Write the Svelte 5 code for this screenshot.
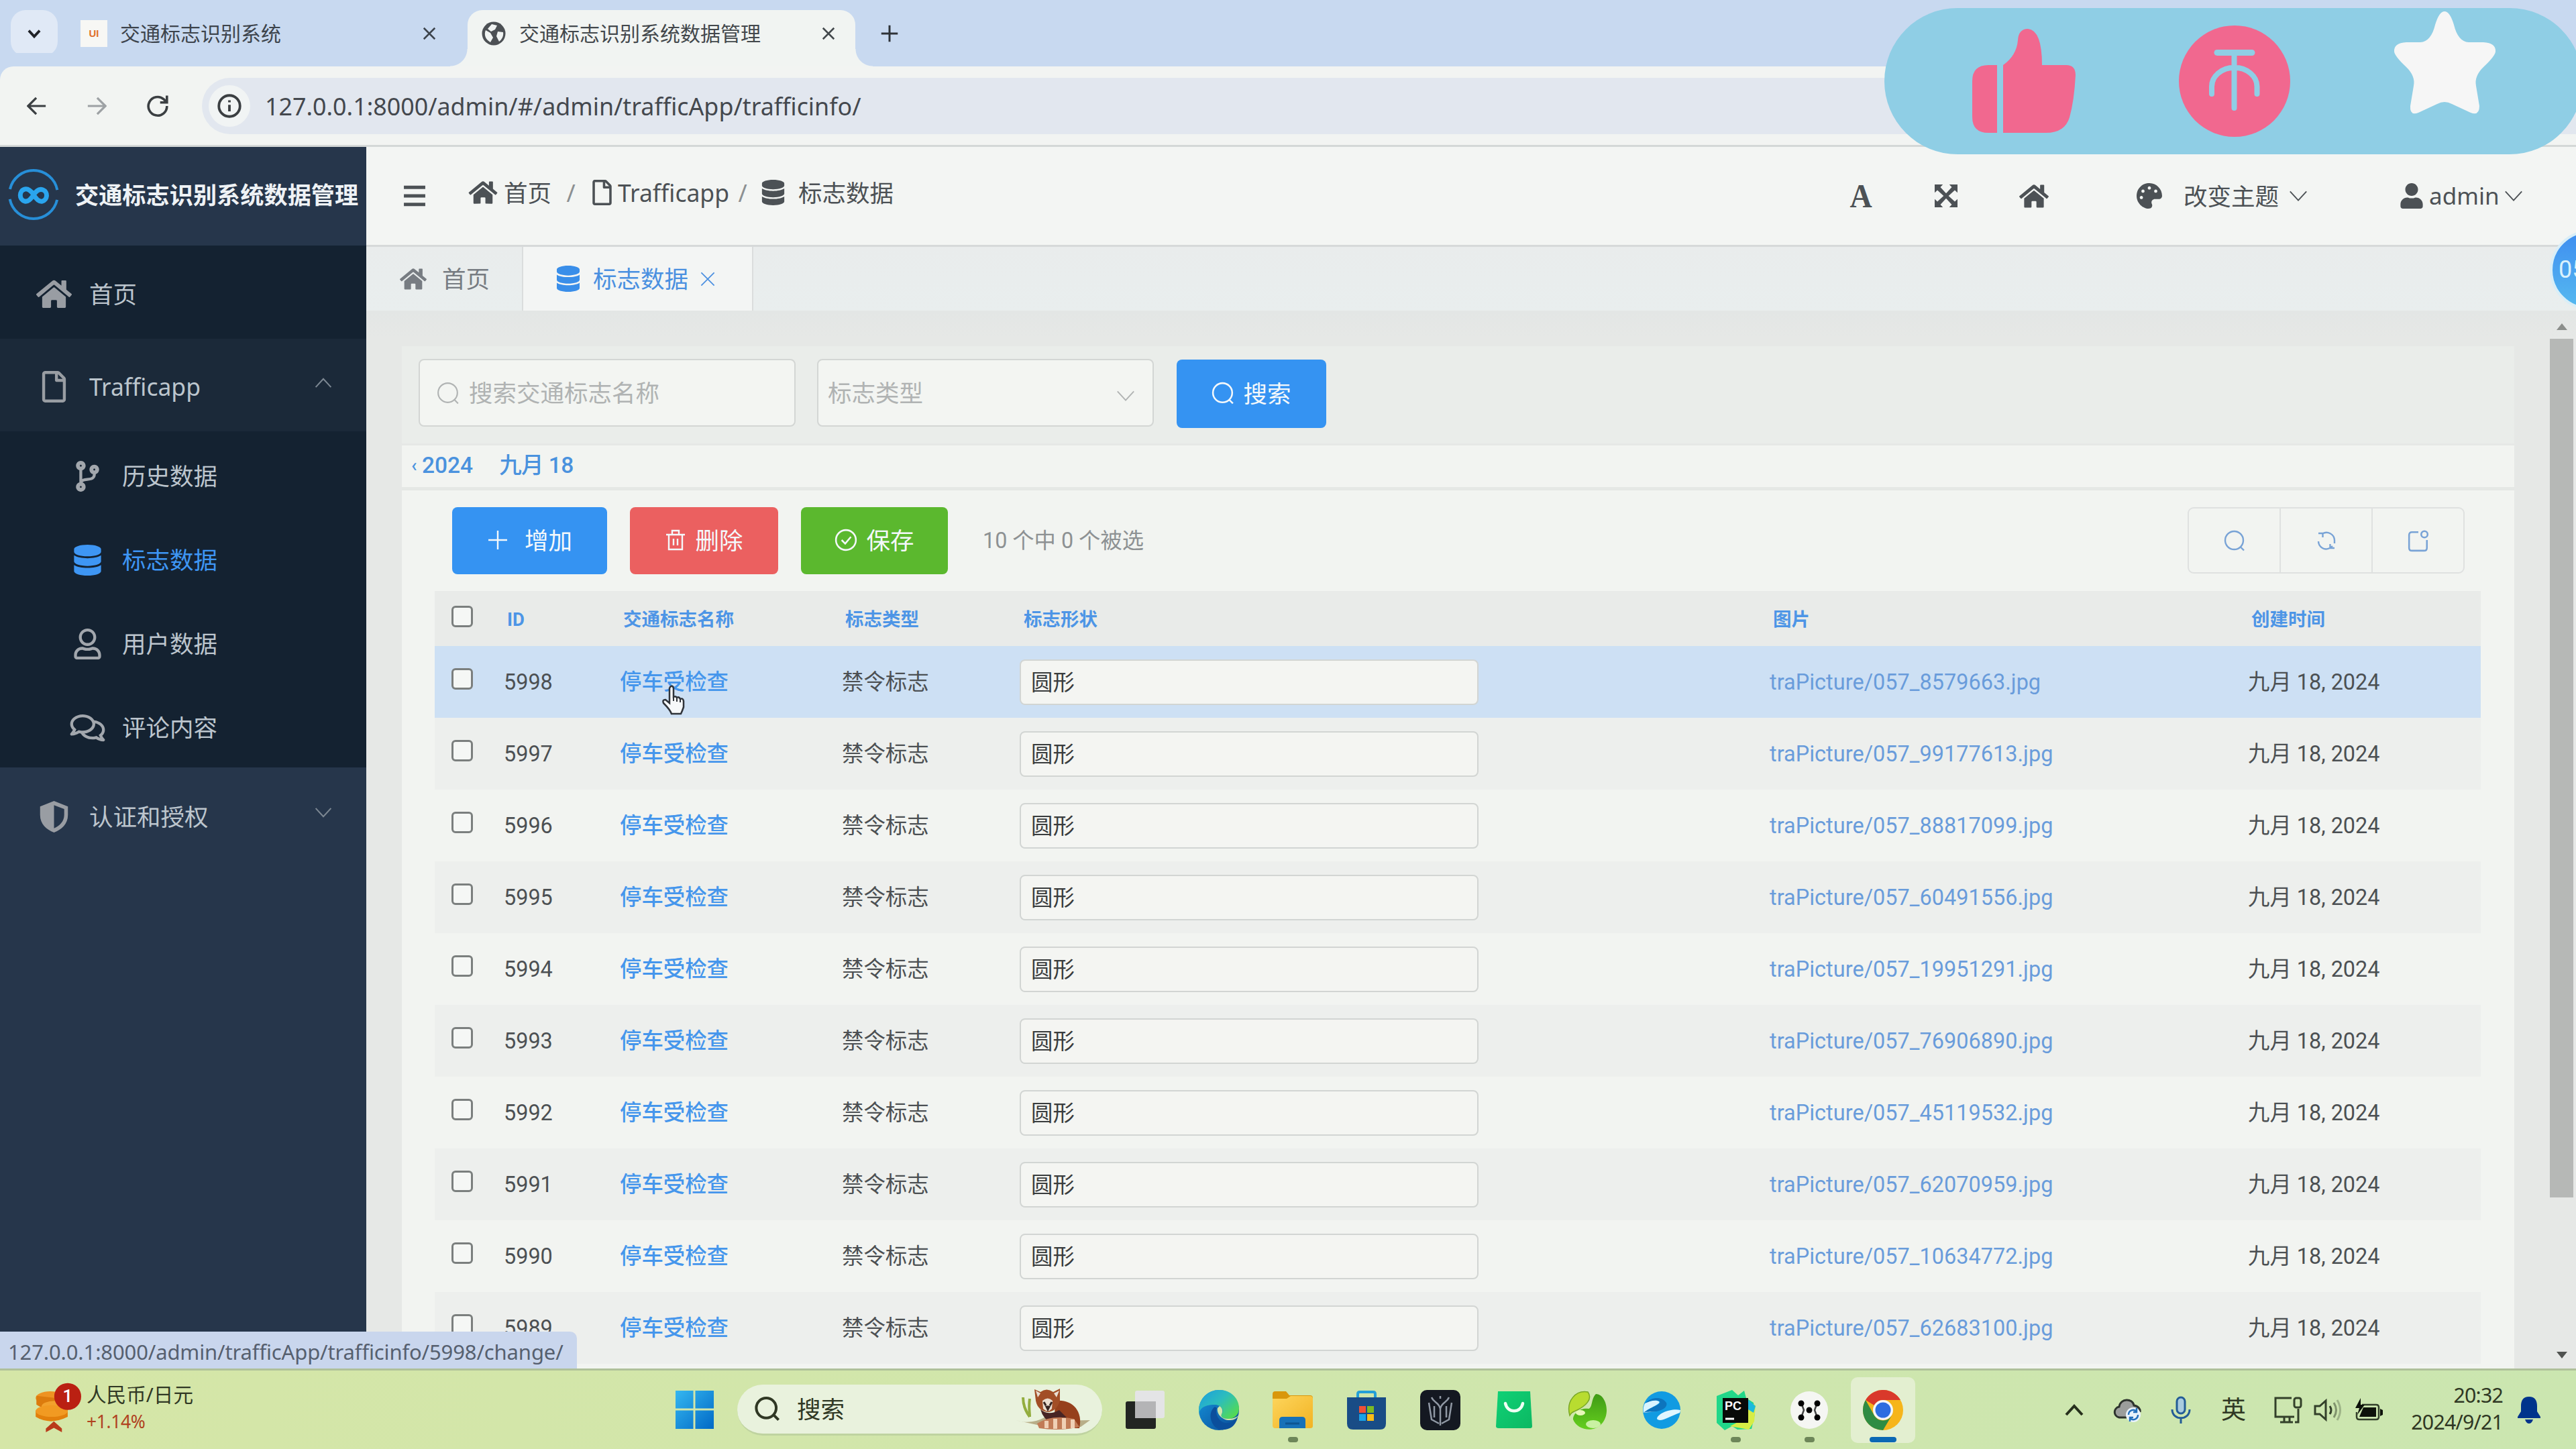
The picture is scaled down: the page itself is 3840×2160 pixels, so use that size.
<script>
  const rows = [
    ['5998', '8579663'], ['5997', '99177613'], ['5996', '88817099'], ['5995', '60491556'],
    ['5994', '19951291'], ['5993', '76906890'], ['5992', '45119532'], ['5991', '62070959'],
    ['5990', '10634772'], ['5989', '62683100']
  ];
  const submenu = [
    { icon: 'branch', label: '历史数据' },
    { icon: 'database', label: '标志数据', active: true },
    { icon: 'userOutline', label: '用户数据' },
    { icon: 'comments', label: '评论内容' }
  ];
  const apps = ['taskview', 'edge', 'folder', 'store', 'legend', 'bag', 'leaf', 'swirl', 'pycharm', 'nodes', 'chrome'];
  const running = ['folder', 'pycharm', 'nodes'];

  const solid = {
    home: ['0 0 576 512', 'M280.37 148.26L96 300.11V464a16 16 0 0 0 16 16l112.06-.29a16 16 0 0 0 15.92-16V368a16 16 0 0 1 16-16h64a16 16 0 0 1 16 16v95.64a16 16 0 0 0 16 16.05L464 480a16 16 0 0 0 16-16V300L295.67 148.26a12.19 12.19 0 0 0-15.3 0zM571.6 251.47L488 182.56V44.05a12 12 0 0 0-12-12h-56a12 12 0 0 0-12 12v72.61L318.47 43a48 48 0 0 0-61 0L4.34 251.47a12 12 0 0 0-1.6 16.9l25.5 31A12 12 0 0 0 45.15 301l235.22-193.74a12.19 12.19 0 0 1 15.3 0L530.9 301a12 12 0 0 0 16.9-1.6l25.5-31a12 12 0 0 0-1.7-16.93z'],
    database: ['0 0 448 512', 'M448 73.143v45.714C448 159.143 347.667 192 224 192S0 159.143 0 118.857V73.143C0 32.857 100.333 0 224 0s224 32.857 224 73.143zM448 176v102.857C448 319.143 347.667 352 224 352S0 319.143 0 278.857V176c48.125 33.143 136.208 48.572 224 48.572S399.874 209.143 448 176zm0 160v102.857C448 479.143 347.667 512 224 512S0 479.143 0 438.857V336c48.125 33.143 136.208 48.572 224 48.572S399.874 369.143 448 336z'],
    file: ['0 0 384 512', 'M369.9 97.9L286 14C277 5 264.8-.1 252.1-.1H48C21.5 0 0 21.5 0 48v416c0 26.5 21.5 48 48 48h288c26.5 0 48-21.5 48-48V131.9c0-12.7-5.1-25-14.1-34zM332.1 128H256V51.9l76.1 76.1zM48 464V48h160v104c0 13.3 10.7 24 24 24h104v288H48z'],
    user: ['0 0 448 512', 'M224 256c70.7 0 128-57.3 128-128S294.7 0 224 0 96 57.3 96 128s57.3 128 128 128zm89.6 32h-16.7c-22.2 10.2-46.9 16-72.9 16s-50.6-5.8-72.9-16h-16.7C60.2 288 0 348.2 0 422.4V464c0 26.5 21.5 48 48 48h352c26.5 0 48-21.5 48-48v-41.6c0-74.2-60.2-134.4-134.4-134.4z'],
    userOutline: ['0 0 448 512', 'M313.6 304c-28.7 0-42.5 16-89.6 16-47.1 0-60.8-16-89.6-16C60.2 304 0 364.2 0 438.4V464c0 26.5 21.5 48 48 48h352c26.5 0 48-21.5 48-48v-25.6c0-74.2-60.2-134.4-134.4-134.4zM400 464H48v-25.6c0-47.6 38.8-86.4 86.4-86.4 14.6 0 38.3 16 89.6 16 51.7 0 74.9-16 89.6-16 47.6 0 86.4 38.8 86.4 86.4V464zM224 288c79.5 0 144-64.5 144-144S303.5 0 224 0 80 64.5 80 144s64.5 144 144 144zm0-240c52.9 0 96 43.1 96 96s-43.1 96-96 96-96-43.1-96-96 43.1-96 96-96z'],
    palette: ['0 0 512 512', 'M204.3 5C104.9 24.4 24.8 104.3 5.2 203.4c-37 187 131.7 326.4 258.8 306.7 41.2-6.4 61.4-54.6 42.5-91.7-23.1-45.4 9.9-98.4 60.9-98.4h79.7c35.8 0 64.8-29.6 64.9-65.3C511.5 97.1 368.1-26.9 204.3 5zM96 320c-17.7 0-32-14.3-32-32s14.3-32 32-32 32 14.3 32 32-14.3 32-32 32zm32-128c-17.7 0-32-14.3-32-32s14.3-32 32-32 32 14.3 32 32-14.3 32-32 32zm128-64c-17.7 0-32-14.3-32-32s14.3-32 32-32 32 14.3 32 32-14.3 32-32 32zm128 64c-17.7 0-32-14.3-32-32s14.3-32 32-32 32 14.3 32 32-14.3 32-32 32z'],
    branch: ['0 0 384 512', 'M384 144c0-44.2-35.8-80-80-80s-80 35.8-80 80c0 36.4 24.3 67.1 57.5 76.8-.6 16.1-4.2 28.5-11 36.9-15.4 19.2-49.3 22.4-85.2 25.7-28.2 2.6-57.4 5.4-81.3 16.9v-144c32.5-10.2 56-40.5 56-76.3 0-44.2-35.8-80-80-80S0 35.8 0 80c0 35.8 23.5 66.1 56 76.3v199.3C23.5 365.9 0 396.2 0 432c0 44.2 35.8 80 80 80s80-35.8 80-80c0-34-21.2-63.1-51.2-74.6 3.1-5.2 7.8-9.8 14.9-13.4 16.2-8.2 40.4-10.4 66.1-12.8 42.2-3.9 90-8.4 118.2-43.4 14-17.4 21.1-39.8 21.6-67.9 31.6-10.8 54.4-40.7 54.4-75.9zM80 64c8.8 0 16 7.2 16 16s-7.2 16-16 16-16-7.2-16-16 7.2-16 16-16zm0 384c-8.8 0-16-7.2-16-16s7.2-16 16-16 16 7.2 16 16-7.2 16-16 16zm224-320c8.8 0 16 7.2 16 16s-7.2 16-16 16-16-7.2-16-16 7.2-16 16-16z'],
    expand: ['0 0 32 32', 'M0 0H11.500L8 3.800L16 12.500L24 3.800L20.500 0H32V11.500L28.200 8L19.500 16L28.200 24L32 20.500V32H20.500L24 28.200L16 19.500L8 28.200L11.500 32H0V20.500L3.800 24L12.500 16L3.800 8L0 11.500Z'],
    shield: ['0 0 32 34', 'M16 0L31 6V15C31 25 24 31 16 34C8 31 1 25 1 15V6ZM16 4.500V29.500C22 27 27 22 27 15V8.700Z'],
    comments: ['0 0 576 512', 'M532 386.200c27.500-27.100 44-61.100 44-98.200 0-80-76.500-146.100-176.200-157.900C368.300 72.500 294.300 32 208 32 93.100 32 0 103.600 0 192c0 37 16.500 71 44 98.200-15.300 30.700-37.300 54.500-37.700 54.900-6.300 6.700-8.100 16.500-4.400 25 3.600 8.500 12 14 21.200 14 53.500 0 96.700-20.200 125.200-38.800 9.200 2.100 18.700 3.700 28.400 4.900C208.100 407.600 281.800 448 368 448c20.800 0 40.800-2.400 59.800-6.800C456.300 459.700 499.400 480 553 480c9.200 0 17.500-5.500 21.200-14 3.600-8.500 1.900-18.300-4.400-25-.4-.3-22.500-24.100-37.800-54.800zm-392.800-92.300L122.100 305c-14.100 9.100-28.500 16.300-43.100 21.400 2.700-4.700 5.400-9.700 8-14.800l15.500-31.100L77.700 256C64.200 242.600 48 220.700 48 192c0-60.700 73.300-112 160-112s160 51.300 160 112-73.300 112-160 112c-16.500 0-33-1.900-49-5.600l-19.800-4.500zM498.300 352l-24.700 24.400 15.500 31.100c2.600 5.100 5.300 10.100 8 14.800-14.600-5.100-29-12.300-43.100-21.400l-17.100-11.100-19.900 4.600c-16 3.700-32.500 5.600-49 5.600-54 0-102.200-20.100-131.300-49.700C338 339.500 416 272.900 416 192c0-3.400-.4-6.700-.7-10C479.700 196.500 528 238.800 528 288c0 28.700-16.200 50.600-29.700 64z']
  };
  const line = {
    search: 'M24.500 24.500L30 30M27 15A12.500 12.500 0 1 1 2 15A12.500 12.500 0 0 1 27 15',
    elSearch: 'M25 25.500L30 30.500M29 15.500A13.500 13.500 0 1 1 2 15.500A13.500 13.500 0 0 1 29 15.500',
    plus: 'M16 2V30M2 16H30',
    trash: 'M2 8H30M11 7V2H21V7M6 8V30H26V8M13 14V24M19 14V24',
    check: 'M30 16A14 14 0 1 1 2 16A14 14 0 0 1 30 16M10 16L15 21L23 11.500',
    down: 'M3 9L16 23L29 9',
    up: 'M3 23L16 9L29 23',
    close: 'M5 5L27 27M27 5L5 27',
    back: 'M30 16H3M15 3L2 16L15 29',
    forward: 'M2 16H29M17 3L30 16L17 29',
    reload: 'M29 16A13 13 0 1 1 24.500 6.500L28.500 10.500M29 1.500V11H19.500',
    info: 'M30 16A14 14 0 1 1 2 16A14 14 0 0 1 30 16M16 14.500V23M16 8.500V11',
    menu: 'M1 4H31M1 16H31M1 28H31',
    refresh: 'M4 17A12 12 0 0 0 10 27M28 15A12 12 0 0 0 10 5.500M4 5H10.500V11M28 15V20M28 27H21.500V21M10 27C15 30 21 28 25 24',
    share: 'M16 4H7Q3 4 3 8V26Q3 30 7 30H24Q28 30 28 26V15M29 7A4.500 4.500 0 1 1 20 7A4.500 4.500 0 0 1 29 7'
  };
</script>

{#snippet glyph(name, cls)}
  {#if solid[name]}
    <svg class="ico {cls}" viewBox={solid[name][0]} fill="currentColor" fill-rule="evenodd"><path d={solid[name][1]} /></svg>
  {:else}
    <svg class="ico {cls}" viewBox="0 0 32 32" fill="none" stroke="currentColor"><path d={line[name]} /></svg>
  {/if}
{/snippet}

{#snippet app(name)}
  <svg class="app-icon" viewBox="0 0 60 60">
    {#if name === 'taskview'}
      <rect x="1" y="17" width="45" height="41" rx="3" fill="#222522" />
      <rect x="15" y="1" width="44" height="41" rx="3" fill="#e4e4e6" />
      <rect x="15" y="17" width="31" height="25" fill="#b4b4b6" />
    {:else if name === 'edge'}
      <circle cx="30" cy="30" r="30" fill="url(#edgeBase)" />
      <path d="M0 30C1 12 14 0 31 0C48 0 60 13 60 27C60 37 53 43 44 43C36 43 32 40 34 36C39 29 32 22 24 22C13 22 3 24 0 35Z" fill="url(#edgeTop)" />
      <path d="M27 27C24 34 29 47 39 49C46 50 53 47 58 41C54 56 44 60 32 59C18 56 12 34 24 25Z" fill="#0b4f9c" />
      <path d="M28 27C26 36 36 46 47 45C53 45 57 42 59 38C57 40 52 43 44 43C36 43 32 40 34 36C36 33 36 27 31 24Z" fill="#cfe7aa" />
    {:else if name === 'folder'}
      <path d="M0 6Q0 2 4 2H20L25 8H56Q60 8 60 12V20H0Z" fill="#d9970c" />
      <path d="M0 13H21L27 9H56Q60 9 60 13V54Q60 57 56 57H4Q0 57 0 53Z" fill="url(#folderFill)" />
      <path d="M10 57V45Q10 40 15 40H44Q49 40 49 45V57Z" fill="#1771b8" />
      <path d="M19 50H40" stroke="#0d5592" stroke-width="3" />
    {:else if name === 'store'}
      <path d="M17 14V6Q17 3 20 3H40Q43 3 43 6V14" fill="none" stroke="#239fd8" stroke-width="4" />
      <path d="M1 11H59V50Q59 59 50 59H10Q1 59 1 50Z" fill="#194c86" />
      <path d="M19 24H29V34H19Z" fill="#ef5036" /><path d="M31 24H41V34H31Z" fill="#7cba24" />
      <path d="M19 36H29V46H19Z" fill="#18a3e8" /><path d="M31 36H41V46H31Z" fill="#fbbc16" />
    {:else if name === 'legend'}
      <rect width="60" height="60" rx="10" fill="#141821" />
      <path d="M17 11C20 19 28 18 30 28C32 18 40 19 43 11M13 19L17 44L28 50M47 19L43 44L32 50M30 9V13M30 26V53M21 24V41M39 24V41" fill="none" stroke="#9098a4" stroke-width="2.500" />
    {:else if name === 'bag'}
      <path d="M6 2H54L57 54Q57 57 54 57H7Q3 57 3 54Z" fill="url(#bagFill)" />
      <path d="M17 20C20 35 40 35 43 20" fill="none" stroke="#effff4" stroke-width="4.500" stroke-linecap="round" />
    {:else if name === 'leaf'}
      <path d="M3 38C-3 16 12 0 30 3C38 14 26 24 14 30C7 33 5 34 3 38Z" fill="#b8dc30" stroke="#78a625" stroke-width="1.500" />
      <path d="M42 6C57 6 65 36 50 51C39 64 14 60 8 44C8 34 20 26 31 28C37 27 35 12 42 6Z" fill="url(#leafFill)" />
      <ellipse cx="19" cy="34" rx="7" ry="4" fill="#e7f7b8" /><ellipse cx="38" cy="51" rx="11" ry="6" fill="#c9f1a3" />
    {:else if name === 'swirl'}
      <circle cx="30" cy="30" r="28" fill="#119be2" />
      <path d="M5 20C16 9 31 10 37 19C39 24 34 30 22 32L3 34C8 27 32 22 27 17C22 14 12 17 5 20Z" fill="#0d74bd" />
      <path d="M5 20C12 17 20 14 26 17C30 21 12 26 3 34L22 32C12 33 6 32 3 34C2 28 3 24 5 20Z" fill="#d9f4ff" />
      <path d="M58 30C44 27 24 35 23 43C28 49 40 40 57 34C57 33 58 32 58 30Z" fill="#dff6ff" />
    {:else if name === 'pycharm'}
      <path d="M2 9L25 0L34 8L43 1L46 12L57 19L59 36L54 58L33 59L25 54L14 60L2 49Z" fill="#21d789" />
      <path d="M46 16L60 23L58 47L50 59L22 54L43 43Z" fill="#d7ed45" /><path d="M49 15L60 24L57 34L49 29Z" fill="#1bb9dc" />
      <rect x="11" y="12" width="38" height="37" fill="#080a08" />
      <text x="14" y="30" class="pc">PC</text><path d="M15 43H28" stroke="#fff" stroke-width="3" />
    {:else if name === 'nodes'}
      <circle cx="30" cy="30" r="28" fill="#f5f6f3" />
      <path d="M18 19L22 30L18 41M42 19L38 30L42 41" fill="none" stroke="#444" stroke-width="2.500" />
      <circle cx="18" cy="20" r="4.500" /><circle cx="42" cy="20" r="4.500" /><circle cx="18" cy="41" r="4.500" /><circle cx="42" cy="41" r="4.500" /><circle cx="30" cy="30" r="4.500" />
    {:else}
      <circle cx="30" cy="30" r="30" fill="#f6b51b" />
      <path d="M4 15A30 30 0 0 1 56 15H30A15 15 0 0 0 17 23Z" fill="#d9392b" />
      <path d="M4 15A30 30 0 0 0 30 60L43 38A15 15 0 0 1 17 38Z" fill="#2f8c43" />
      <circle cx="30" cy="30" r="15" fill="#f3f6f8" /><circle cx="30" cy="30" r="11.500" fill="#2c6de0" />
    {/if}
  </svg>
{/snippet}

<svg class="defs" width="0" height="0">
  <defs>
    <linearGradient id="edgeBase" x1="0" y1="0" x2="1" y2="1"><stop offset="0" stop-color="#1595dd" /><stop offset="1" stop-color="#0a4a95" /></linearGradient>
    <linearGradient id="edgeTop" x1="0" y1="0" x2="1" y2=".8"><stop offset="0" stop-color="#1b9de0" /><stop offset=".5" stop-color="#2cbdbd" /><stop offset="1" stop-color="#55dc4c" /></linearGradient>
    <linearGradient id="folderFill" x1="0" y1="0" x2="1" y2="1"><stop offset="0" stop-color="#fdd55c" /><stop offset="1" stop-color="#f2b323" /></linearGradient>
    <linearGradient id="bagFill" x1="0" y1="0" x2="1" y2="1"><stop offset="0" stop-color="#10d176" /><stop offset="1" stop-color="#0cb862" /></linearGradient>
    <linearGradient id="leafFill" x1="0" y1="0" x2="0" y2="1"><stop offset="0" stop-color="#3f9a15" /><stop offset="1" stop-color="#65cf1e" /></linearGradient>
    <linearGradient id="winFill" x1="0" y1="0" x2="1" y2="1"><stop offset="0" stop-color="#35b7f0" /><stop offset="1" stop-color="#0069c6" /></linearGradient>
  </defs>
</svg>

<div class="screen">
  <div class="tabstrip">
    <div class="tab-menu">{@render glyph('down', 'w18 heavy')}</div>
    <div class="tab idle">
      <div class="favicon">UI</div>
      <span>交通标志识别系统</span>
      {@render glyph('close', 'w24 medium')}
    </div>
    <div class="tab current">
      <svg class="globe" viewBox="0 0 36 36"><circle cx="18" cy="18" r="17.500" fill="#4c5054" /><path d="M6 13L13 17L17 24L13 31C6 27 3 20 6 13ZM15 4L23 6L20 12L14 15L9 11ZM24 15L32 16C33 22 30 27 26 30L22 22Z" fill="#f0f3f2" /></svg>
      <span>交通标志识别系统数据管理</span>
      {@render glyph('close', 'w24 medium')}
    </div>
    <div class="new-tab">{@render glyph('plus', 'w28 medium')}</div>
  </div>

  <div class="toolbar">
    {@render glyph('back', 'w30 medium')}
    <div class="fwd">{@render glyph('forward', 'w30 medium')}</div>
    {@render glyph('reload', 'w34 medium')}
    <div class="address">
      <div class="info">{@render glyph('info', 'w36 medium')}</div>
      <span>127.0.0.1:8000/admin/#/admin/trafficApp/trafficinfo/</span>
    </div>
  </div>

  <div class="page">
    <aside>
      <div class="brand">
        <svg class="logo" viewBox="0 0 80 80" fill="none"><circle cx="40" cy="40" r="36" stroke="#278fd8" stroke-width="4" stroke-dasharray="98 15" stroke-dashoffset="-8" /><path d="M40 40C35 33 31 31 27 32C18 34 18 48 27 50C33 51 36 46 40 41C44 34 49 31 54 33C62 36 61 48 53 50C48 51 44 47 40 40Z" stroke="#2aa5ee" stroke-width="7" /></svg>
        <strong>交通标志识别系统数据管理</strong>
      </div>
      <div class="menu-row home">{@render glyph('home', 'menu-ico')}<span>首页</span></div>
      <div class="menu-row open">{@render glyph('file', 'menu-ico tall')}<span class="latin">Trafficapp</span>{@render glyph('up', 'w28 arrow')}</div>
      <div class="submenu">
        {#each submenu as item}
          <div class="sub" class:active={item.active}>{@render glyph(item.icon, 'sub-ico')}<span>{item.label}</span></div>
        {/each}
      </div>
      <div class="menu-row auth">{@render glyph('shield', 'menu-ico tall')}<span>认证和授权</span>{@render glyph('down', 'w28 arrow')}</div>
    </aside>

    <main>
      <header>
        {@render glyph('menu', 'w34 burger')}
        <div class="crumbs">
          {@render glyph('home', 'crumb-home')}<span class="c1">首页</span><i>/</i>
          {@render glyph('file', 'crumb-file')}<span class="c2">Trafficapp</span><i>/</i>
          {@render glyph('database', 'crumb-db')}<span>标志数据</span>
        </div>
        <div class="tools">
          <b class="font-a">A</b>
          {@render glyph('expand', 'w34 t-expand')}
          {@render glyph('home', 't-home')}
          {@render glyph('palette', 'w38 t-palette')}
          <span class="theme">改变主题</span>
          {@render glyph('down', 'w30 thin')}
          {@render glyph('user', 't-user')}
          <span class="admin">admin</span>
          {@render glyph('down', 'w30 thin')}
        </div>
      </header>
      <nav>
        <div class="ptab">{@render glyph('home', 'w40')}<span>首页</span></div>
        <div class="ptab on">{@render glyph('database', 'n-db')}<span>标志数据</span>{@render glyph('close', 'w28 thin')}</div>
      </nav>

      <div class="body">
        <div class="card">
          <div class="filters">
            <div class="field">{@render glyph('elSearch', 'w34 thin')}<span>搜索交通标志名称</span></div>
            <div class="select"><span>标志类型</span>{@render glyph('down', 'w30 thin caret')}</div>
            <div class="btn blue find">{@render glyph('elSearch', 'w34')}<span>搜索</span></div>
          </div>
          <div class="dates"><small>‹</small><span>2024</span><span class="day">九月 18</span></div>
          <div class="actions">
            <div class="btn blue add">{@render glyph('plus', 'w32')}<span>增加</span></div>
            <div class="btn red">{@render glyph('trash', 'w32')}<span>删除</span></div>
            <div class="btn green">{@render glyph('check', 'w34')}<span>保存</span></div>
            <span class="count">10 个中 0 个被选</span>
            <div class="group">
              <div>{@render glyph('elSearch', 'w32')}</div>
              <div>{@render glyph('refresh', 'w32')}</div>
              <div>{@render glyph('share', 'w34')}</div>
            </div>
          </div>
          <div class="table">
            <div class="tr th">
              <div class="box"></div><span class="id">ID</span><span>交通标志名称</span><span>标志类型</span><span>标志形状</span><span>图片</span><span>创建时间</span>
            </div>
            {#each rows as [id, pic], i}
              <div class="tr" class:hover={i === 0} class:odd={i % 2 === 1}>
                <div class="box"></div><span class="id">{id}</span><b class="name">停车受检查</b><span>禁令标志</span>
                <div class="shape">圆形</div><span class="pic">traPicture/057_{pic}.jpg</span><span class="date">九月 18, 2024</span>
              </div>
            {/each}
          </div>
        </div>
        <div class="scroll">
          <svg viewBox="0 0 16 10"><path d="M8 0L16 10H0Z" fill="#8b8e8b" /></svg>
          <div class="thumb"></div>
          <svg class="end" viewBox="0 0 16 10"><path d="M0 0H16L8 10Z" fill="#505350" /></svg>
        </div>
      </div>
    </main>
  </div>

  <footer>
    <div class="widget">
      <svg class="coins" viewBox="0 0 70 70"><ellipse cx="22" cy="22" rx="20" ry="9" fill="#ee9322" /><path d="M3 19V31Q15 40 30 34V22Z" fill="#dc7b0d" /><ellipse cx="28" cy="34" rx="18" ry="8" fill="#f2a12d" /><path d="M2 39V48Q22 60 46 48V37Q20 50 2 39Z" fill="#e2800c" /><ellipse cx="24" cy="40" rx="22" ry="8" fill="#f19a22" /><path d="M16 69V64L27 54L38 64V69L27 63Z" fill="#b93b1b" /><circle cx="46" cy="20" r="18.500" fill="#ba2012" /><text x="46" y="28" text-anchor="middle" class="badge">1</text></svg>
      <div class="fx"><span>人民币/日元</span><em>+1.14%</em></div>
    </div>
    <svg class="win" viewBox="0 0 60 60" fill="url(#winFill)"><path d="M1 1H28V28H1ZM31 1H59V28H31ZM1 31H28V59H1ZM31 31H59V59H31Z" /></svg>
    <div class="search">
      {@render glyph('search', 'w38 medium')}<span>搜索</span>
      <svg class="panda" viewBox="0 0 116 64">
        <path d="M12 15C12 28 16 36 22 44M22 17C20 30 22 36 22 44" stroke="#93ad3e" stroke-width="4" fill="none" />
        <path d="M1 49Q24 56 44 45L60 50L112 49L98 59L42 58Z" fill="#b8ae88" />
        <path d="M60 20C84 17 102 34 96 61H58Z" fill="#96401c" />
        <path d="M38 33Q50 43 66 34L80 48L56 54Q42 48 38 33Z" fill="#472424" />
        <path d="M29 3L38 7Q47 0 57 7L67 2V20Q62 36 49 37Q34 35 31 20Z" fill="#a24e26" />
        <path d="M31 5L38 9L34 15ZM66 5L58 9L62 15ZM41 20Q49 13 56 20L55 32Q49 39 42 32Z" fill="#e9ddd0" />
        <path d="M43 22L46 27M55 22L52 27M47 29H51L49 33Z" stroke="#352421" stroke-width="3" />
        <path d="M33 54Q54 40 88 47L96 59Q68 66 36 61Z" fill="#c17b56" />
        <path d="M47 50V61M60 47V62M73 46V62M86 48V61" stroke="#efd0b5" stroke-width="6" />
      </svg>
    </div>
    <div class="apps">
      {#each apps as name}
        <div class="slot" class:focused={name === 'chrome'} class:running={running.includes(name)}>{@render app(name)}</div>
      {/each}
    </div>
    <div class="tray">
      <svg class="i-caret" viewBox="0 0 28 18" fill="none" stroke="#26301c" stroke-width="4"><path d="M2 16L14 3L26 16" /></svg>
      <svg class="i-cloud" viewBox="0 0 42 38"><path d="M20 30H9C0 28 0 16 9 14C11 1 29 1 31 12C38 13 41 18 40 22" fill="#9b9d9b" stroke="#2d332d" stroke-width="3" /><circle cx="30" cy="26" r="11" fill="#e9f2fb" /><path d="M23 26A7 7 0 0 1 35 21M37 26A7 7 0 0 1 25 31M35 16V22H30M25 36V30H30" fill="none" stroke="#2470bd" stroke-width="2.500" /></svg>
      <svg class="i-mic" viewBox="0 0 30 42" fill="none" stroke="#235c96" stroke-width="3"><rect x="9" y="2" width="12" height="24" rx="6" fill="#a9cbdf" /><path d="M2 20C2 37 28 37 28 20M15 33V41" /></svg>
      <span class="ime">英</span>
      <svg class="i-net" viewBox="0 0 42 42" fill="none" stroke="#33402a" stroke-width="3"><path d="M26 3H2V31H30M15 31V39M9 39H28M23 31V39M36 19V39H31" /><rect x="30" y="3" width="10" height="14" rx="3" /></svg>
      <svg class="i-vol" viewBox="0 0 42 36" fill="none" stroke="#33402a" stroke-width="3"><path d="M2 12H9L18 4V32L9 24H2Z" /><path d="M24 12Q28 18 24 24" /><path d="M30 7Q37 18 30 29" opacity=".5" /><path d="M35 3Q44 18 35 33" opacity=".3" /></svg>
      <svg class="i-bat" viewBox="0 0 42 36"><path d="M10 10H31Q35 10 35 14V28Q35 32 31 32H6Q2 32 2 28V21" fill="none" stroke="#33402a" stroke-width="2.500" /><path d="M12 14H31V28H6ZM37 16L41 18V25L37 27Z" fill="#0d120a" /><path d="M8 0L0 15H6L3 25L14 10H8Z" fill="#0d120a" /></svg>
      <div class="clock"><span>20:32</span><span>2024/9/21</span></div>
      <svg class="i-bell" viewBox="0 0 34 42" fill="#00348c"><path d="M17 1C8 1 5 7 5 15V23L0 31V33H34V31L29 23V15C29 7 26 1 17 1ZM11 35H23Q21 41 17 41Q13 41 11 35Z" /></svg>
    </div>
  </footer>

  <div class="status">127.0.0.1:8000/admin/trafficApp/trafficinfo/5998/change/</div>
  <div class="timer">05</div>
  <svg class="cursor" viewBox="0 0 36 46"><path d="M13 3Q17 0 18 5V18Q21 16 23 19Q26 17 28 21Q32 19 33 24V33Q31 39 29 43H15Q13 37 3 27Q1 22 6 22L12 27V5Z" fill="#f7f9fa" stroke="#30343a" stroke-width="2.500" /><path d="M18 17V24M23 19V25M28 21V26" stroke="#30343a" stroke-width="2" /></svg>

  <svg class="reactions" viewBox="2809 12 1041 218">
    <rect x="2809" y="12" width="1041" height="218" rx="109" fill="#8fcee5" />
    <path d="M2977 97V198H2964Q2940 198 2940 174V121Q2940 97 2964 97ZM2986 97Q3006 83 3008 60Q3009 43 3023 43Q3044 45 3044 97H3080Q3094 97 3094 112Q3092 150 3085 175Q3078 198 3050 198H2986Z" fill="#f1688f" />
    <circle cx="3331" cy="121" r="83" fill="#f1688f" />
    <path d="M3305 78.500H3357" stroke="#8fcee5" stroke-width="9" stroke-linecap="round" />
    <path d="M3330.500 80V161M3297 140V129A33.500 28 0 0 1 3364.500 129V140" stroke="#8fcee5" stroke-width="8" stroke-linecap="round" fill="none" />
    <path d="M3644 17Q3652 17 3658 37Q3664 62 3680 63H3702Q3721 64 3720 77Q3719 84 3703 99Q3688 113 3691 128L3696 158Q3696 173 3683 168L3655 155Q3644 149 3633 155L3605 168Q3592 173 3593 158L3598 128Q3601 113 3586 99Q3570 84 3569 77Q3568 64 3587 63H3608Q3624 62 3630 37Q3636 17 3644 17Z" fill="#f6f6f6" />
  </svg>
</div>

<style>
  :global(body) { margin: 0; overflow: hidden; }
  * { box-sizing: border-box; }
  .screen { position: relative; width: 3840px; height: 2160px; overflow: hidden; background: #f2f4f2; color: #4b5054; font-family: "Noto Sans", "Noto Sans CJK SC", sans-serif; font-size: 35.500px; line-height: 1.2; white-space: nowrap; display: flex; flex-direction: column; }
  .defs { position: absolute; }
  svg { display: block; flex: none; }
  .ico { stroke-width: 2.400; width: 34px; height: 34px; }
  .ico[fill="currentColor"] { stroke: none; }
  .w18 { width: 20px; height: 20px; }
  .w24 { width: 24px; height: 24px; }
  .w28 { width: 28px; height: 28px; }
  .w30 { width: 30px; height: 30px; }
  .w32 { width: 32px; height: 32px; }
  .w34 { width: 34px; height: 34px; }
  .w36 { width: 36px; height: 36px; }
  .w38 { width: 38px; height: 38px; }
  .w40 { width: 40px; height: 36px; }
  .thin { stroke-width: 2; }
  .medium { stroke-width: 3.400; }
  .heavy { stroke-width: 6; }

  .tabstrip { height: 99px; flex: none; background: #c8d9f0; display: flex; align-items: center; padding-left: 16px; color: #3d444c; font-size: 30px; }
  .tab-menu { width: 70px; height: 69px; border-radius: 22px; background: #e0e9f6; color: #202328; display: flex; align-items: center; justify-content: center; }
  .tab { display: flex; align-items: center; }
  .tab span { flex: 1; }
  .tab.idle { width: 611px; padding: 0 45px 0 34px; }
  .favicon { width: 40px; height: 40px; margin-right: 19px; background: #f7f7f4; color: #e0702f; font: bold 15px/40px "Liberation Sans", sans-serif; text-align: center; }
  .tab.current { position: relative; width: 578px; height: 84px; margin-top: 15px; padding: 0 28px 14px 21px; background: #f1f4f2; border-radius: 22px 22px 0 0; color: #43484c; }
  .tab.current::before, .tab.current::after { content: ""; position: absolute; bottom: 0; width: 26px; height: 26px; }
  .tab.current::before { left: -26px; background: radial-gradient(circle at 0 0, transparent 25px, #f1f4f2 26px); }
  .tab.current::after { right: -26px; background: radial-gradient(circle at 100% 0, transparent 25px, #f1f4f2 26px); }
  .globe { width: 36px; height: 36px; margin-right: 20px; }
  .new-tab { margin-left: 37px; color: #2e3338; }

  .toolbar { height: 120px; flex: none; display: flex; align-items: center; padding-left: 40px; background: #f2f4f2; border-bottom: 3px solid #d4d8d7; color: #3b3f42; border-radius: 20px 0 0 0; box-shadow: -20px -20px 0 #c8d9f0; }
  .fwd { margin: 0 59px; color: #9da1a4; }
  .address { margin-left: 49px; flex: 1; height: 84px; border-radius: 42px 0 0 42px; background: #e2e7ef; display: flex; align-items: center; }
  .info { width: 62px; height: 62px; margin: 0 22px 0 10px; border-radius: 50%; background: #f1f4f4; display: flex; align-items: center; justify-content: center; }
  .address span { font-size: 35.800px; color: #44484e; padding-top: 2px; }

  .page { height: 1821px; flex: none; display: flex; }
  aside { width: 546px; flex: none; background: #26364b; color: #bcc5cd; font-size: 35.500px; }
  .brand { height: 147px; display: flex; align-items: center; padding: 0 0 5px 10px; color: #eef2f5; }
  .logo { width: 80px; height: 80px; margin-right: 22px; }
  .brand strong { font-size: 35.200px; font-weight: 700; }
  .menu-row { display: flex; align-items: center; padding: 0 38px 0 54px; background: #142231; }
  .menu-row span { flex: 1; }
  .menu-row :global(.menu-ico) { width: 53px; height: 47px; margin-right: 26px; color: #999da3; }
  .menu-row :global(.arrow) { width: 28px; margin-right: 12px; color: #7c8792; margin-top: -12px; }
  .home { height: 139px; padding-top: 6px; }
  .open { height: 138px; padding-top: 5px; background: #1b2939; }
  .auth { height: 146px; background: #26364b; }
  .submenu { height: 501px; padding-top: 4px; background: #142231; }
  .sub { height: 125px; display: flex; align-items: center; padding-left: 104px; }
  .sub span { font-size: 35.500px; }
  .sub :global(.sub-ico) { width: 53px; height: 46px; margin-right: 25px; color: #a2a7ad; }
  .active, .sub.active :global(.sub-ico) { color: #3e96f4; }

  main { flex: 1; min-width: 0; display: flex; flex-direction: column; }
  header { height: 149px; flex: none; display: flex; align-items: center; padding: 0 78px 0 54px; border-bottom: 3px solid #d6d9d9; background: #f3f5f3; color: #4c5155; }
  .burger { stroke-width: 4.500; width: 36px; }
  .crumbs { display: flex; align-items: center; margin: -10px 0 0 62px; flex: 1; }
  .crumbs i { font-style: normal; color: #8c9092; width: 14px; text-align: center; margin: 0 25px 0 21px; }
  .crumb-home { width: 44px; height: 38px; margin-right: 9px; }
  .crumb-file { width: 29px; height: 38px; margin-right: 9px; }
  .crumb-db { width: 35px; height: 38px; margin-right: 20px; }
  .c1 { width: 72px; }
  .c2 { width: 165px; }
  .crumbs .c2 + i { margin: 0 21px 0 14px; }
  .tools { display: flex; align-items: center; }
  .font-a { font: bold 50px/50px "Liberation Serif", serif; width: 36px; text-align: center; transform: scaleX(.92); }
  .t-expand { margin-left: 92px; }
  .t-home { width: 44px; height: 39px; margin-left: 92px; }
  .t-palette { margin: 0 32px 0 131px; }
  .theme { width: 156px; }
  .t-user { width: 34px; height: 38px; margin: 0 9px 0 137px; }
  .admin { width: 111px; font-size: 35px; }
  nav { height: 95px; flex: none; display: flex; background: linear-gradient(#e9ecec, #e9eeee); color: #777c82; }
  .ptab { width: 234px; display: flex; align-items: center; padding-left: 50px; border-right: 2px solid #dadddd; }
  .ptab span { margin-left: 23px; }
  .ptab.on { width: 343px; background: #f3f5f4; color: #4a90e0; }
  .ptab.on :global(.n-db) { width: 34px; height: 39px; color: #398ee9; }
  .ptab.on span { margin: 0 15px 0 20px; }

  .body { flex: 1; min-height: 0; overflow: hidden; display: flex; justify-content: space-between; padding: 53px 4px 0 53px; background: linear-gradient(#e3e6e5, #e6e8e6 40px); }
  .card { width: 3149px; background: #f2f4f1; }
  .filters { height: 148px; display: flex; padding: 19px 26px 19px 25px; background: #eaedea; border-bottom: 3px solid #e6e8e6; }
  .field, .select { height: 101px; display: flex; align-items: center; border: 2px solid #d3d6d4; border-radius: 8px; background: #f3f5f2; color: #b0b3b3; }
  .field { width: 562px; padding-left: 25px; gap: 14px; }
  .select { width: 502px; margin: 0 34px 0 32px; padding: 0 25px 0 14px; justify-content: space-between; }
  .select :global(.caret) { margin-top: 8px; }
  .btn { height: 100px; border-radius: 8px; color: #f4f8fb; display: flex; align-items: center; justify-content: center; gap: 13px; padding-bottom: 2px; font-size: 35.500px; }
  .blue { background: #3593f2; }
  .red { background: #eb6060; width: 221px; margin: 0 34px; }
  .green { background: #5bb82e; width: 219px; }
  .find { width: 223px; height: 102px; margin-top: 1px; }
  .add { width: 231px; gap: 24px; }
  .dates { height: 67px; display: flex; align-items: center; padding: 0 0 2px 14px; border-bottom: 5px solid #e5e8e5; color: #4a92de; font: 500 33.500px/40px Roboto, "Noto Sans CJK SC", sans-serif; }
  .dates small { font-size: 28px; width: 16px; }
  .day { margin-left: 39px; letter-spacing: -.6px; }
  .actions { height: 150px; display: flex; padding: 25px 0 0 75px; }
  .count { margin-left: 52px; line-height: 101px; color: #8d9193; font-family: Roboto, "Noto Sans CJK SC", sans-serif; font-size: 32.300px; }
  .group { width: 413px; height: 99px; margin: 0 74px 0 auto; display: flex; border: 2px solid #dfe1e0; border-radius: 9px; color: #79a3d6; }
  .group div { flex: 1; display: flex; align-items: center; justify-content: center; }
  .group div + div { border-left: 2px solid #dfe1e0; }
  .table { width: 3050px; margin-left: 49px; font: 400 32.400px/40px Roboto, "Noto Sans CJK SC", sans-serif; color: #4c5053; }
  .tr { height: 107px; display: grid; grid-template-columns: 103px 173px 331px 266px 1117px 713px 1fr; align-items: center; padding-left: 0; }
  .tr.odd { background: #edefed; }
  .tr.hover { background: #cde0f4; }
  .tr.th { height: 82px; background: #e9ebe9; color: #4d95e6; font-size: 27.500px; font-weight: 700; }
  .th span { padding: 4px 0 0 5px; }
  .box { width: 32px; height: 32px; margin: -10px 0 0 25px; border: 3px solid #7b7f7e; border-radius: 6px; background: #f5f7f5; }
  .th .box { margin-top: -6px; }
  .name { font-weight: 500; color: #4596ec; }
  .shape { width: 684px; height: 68px; margin: 0 0 0 -1px; padding-left: 15px; border: 2px solid #d2d5d3; border-radius: 8px; background: #f4f5f2; color: #393c3d; line-height: 66px; }
  .pic { color: #699cdb; letter-spacing: .05px; }
  .scroll { width: 35px; margin-top: -34px; display: flex; flex-direction: column; align-items: center; }
  .scroll svg { width: 16px; height: 10px; }
  .thumb { width: 35px; height: 1280px; margin-top: 13px; background: #b6b8b6; }
  .scroll .end { margin-top: 230px; }

  footer { height: 120px; flex: none; display: flex; align-items: center; background: linear-gradient(90deg, #d5e6a7, #d0e6ac 50%, #cbe6b0); border-top: 3px solid #afc09a; color: #303824; }
  .widget { display: flex; align-items: center; width: 1006px; padding-left: 51px; }
  .coins { width: 76px; height: 76px; margin-top: -8px; }
  .badge { fill: #fff; font: 500 24px Roboto, sans-serif; }
  .fx { display: flex; flex-direction: column; margin: -5px 0 0 2px; font-size: 29.600px; line-height: 40px; }
  .fx em { font-style: normal; color: #b0421f; font-size: 26.500px; letter-spacing: -.4px; }
  .win { width: 59px; height: 59px; }
  .search { width: 544px; height: 76px; margin-left: 34px; padding: 0 11px 0 26px; border-radius: 38px; background: #e9f2dd; border-bottom: 3px solid #bfd3a0; display: flex; align-items: center; }
  .search span { flex: 1; margin-left: 25px; }
  .panda { width: 116px; height: 64px; margin-right: 3px; }
  .apps { display: flex; align-items: center; margin-left: 2px; width: 1212px; }
  .slot { position: relative; width: 96px; height: 98px; margin-left: 14px; display: flex; align-items: center; justify-content: center; border-radius: 10px; flex: none; }
  .app-icon { width: 60px; height: 60px; }
  .pc { fill: #fff; font: bold 18px "Liberation Sans", sans-serif; }
  .focused { background: #e3efd0; }
  .running::after, .focused::after { content: ""; position: absolute; bottom: 1px; left: 41px; width: 15px; height: 8px; border-radius: 4px; background: #6d8659; }
  .focused::after { left: 28px; width: 40px; background: #0b68b4; }
  .tray { display: flex; align-items: center; margin-left: 221px; }
  .i-caret { width: 28px; height: 18px; margin-right: 44px; }
  .i-cloud { width: 42px; height: 38px; margin-right: 44px; }
  .i-mic { width: 30px; height: 42px; margin-right: 45px; }
  .ime { width: 79px; font-size: 37px; }
  .i-net { width: 42px; height: 42px; margin-right: 17px; }
  .i-vol { width: 42px; height: 36px; margin-right: 20px; }
  .i-bat { width: 42px; height: 38px; }
  .clock { width: 178px; margin-top: -4px; display: flex; flex-direction: column; align-items: flex-end; font: 400 30.300px/40px "Noto Sans", sans-serif; letter-spacing: -.8px; }
  .i-bell { width: 34px; height: 42px; margin-left: 22px; }

  .status { position: absolute; left: 0; top: 1985px; width: 860px; height: 55px; padding-left: 12px; background: #c9d6ed; border-radius: 0 10px 0 0; color: #56606f; font-size: 31px; letter-spacing: -.13px; line-height: 60px; }
  .timer { position: absolute; left: 3801px; top: 343px; width: 119px; height: 119px; padding-left: 9px; border: 4px solid #d9eef7; border-radius: 50%; background: linear-gradient(#3f8ef0, #55b9f0); color: #d9f1fc; font: 36px/110px Roboto, sans-serif; }
  .cursor { position: absolute; left: 986px; top: 1021px; width: 36px; height: 46px; }
  .reactions { position: absolute; left: 2809px; top: 12px; width: 1041px; height: 218px; }
</style>
